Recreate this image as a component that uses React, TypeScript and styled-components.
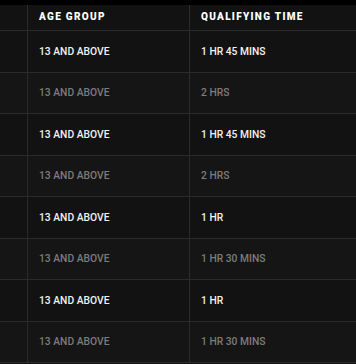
import styled, { createGlobalStyle } from 'styled-components';

type Entry = {
  age: string;
  time: string;
  dim: boolean;
};

const entries: Entry[] = [
  { age: '13 AND ABOVE', time: '1 HR 45 MINS', dim: false },
  { age: '13 AND ABOVE', time: '2 HRS', dim: true },
  { age: '13 AND ABOVE', time: '1 HR 45 MINS', dim: false },
  { age: '13 AND ABOVE', time: '2 HRS', dim: true },
  { age: '13 AND ABOVE', time: '1 HR', dim: false },
  { age: '13 AND ABOVE', time: '1 HR 30 MINS', dim: true },
  { age: '13 AND ABOVE', time: '1 HR', dim: false },
  { age: '13 AND ABOVE', time: '1 HR 30 MINS', dim: true },
];

const GlobalStyle = createGlobalStyle`
  html, body {
    margin: 0;
    padding: 0;
    background: #121212;
  }
  body {
    font-family: Roboto, 'Noto Sans', sans-serif;
  }
`;

export default function App() {
  return (
    <>
      <GlobalStyle />
      <Page>
        <TopStrip />
        <Table>
          <HeaderRow>
            <Cell />
            <HeadCell>AGE GROUP</HeadCell>
            <HeadCell>QUALIFYING TIME</HeadCell>
          </HeaderRow>
          {entries.map((e, i) => (
            <Row key={i} $dim={e.dim}>
              <Cell />
              <Cell>{e.age}</Cell>
              <Cell>{e.time}</Cell>
            </Row>
          ))}
        </Table>
      </Page>
    </>
  );
}

const Page = styled.div`
  width: 356px;
  height: 364px;
  overflow: hidden;
  background: #121212;
`;

const TopStrip = styled.div`
  height: 5px;
  background: #000;
`;

const Table = styled.div`
  display: flex;
  flex-direction: column;
`;

const HeaderRow = styled.div`
  display: grid;
  grid-template-columns: 28px 162px 1fr;
  height: 26px;
  border-bottom: 1px solid #2b2b2b;
  box-sizing: border-box;
  background: #121212;
`;

const Row = styled.div<{ $dim: boolean }>`
  display: grid;
  grid-template-columns: 28px 162px 1fr;
  height: 41.5px;
  border-bottom: 1px solid #2b2b2b;
  box-sizing: border-box;
  background: ${(p) => (p.$dim ? '#151515' : '#121212')};
  color: ${(p) => (p.$dim ? '#7c7c7c' : '#f2f2f2')};
  font-size: 10.3px;
  font-weight: 500;
`;

const Cell = styled.div`
  display: flex;
  align-items: center;
  padding-left: 11px;
  border-right: 1px solid #2b2b2b;
  white-space: nowrap;

  &:first-child {
    padding-left: 0;
  }
  &:last-child {
    border-right: none;
  }
`;

const HeadCell = styled(Cell)`
  color: #ffffff;
  font-size: 10px;
  font-weight: 900;
  letter-spacing: 1.3px;
  padding-bottom: 2px;
`;
